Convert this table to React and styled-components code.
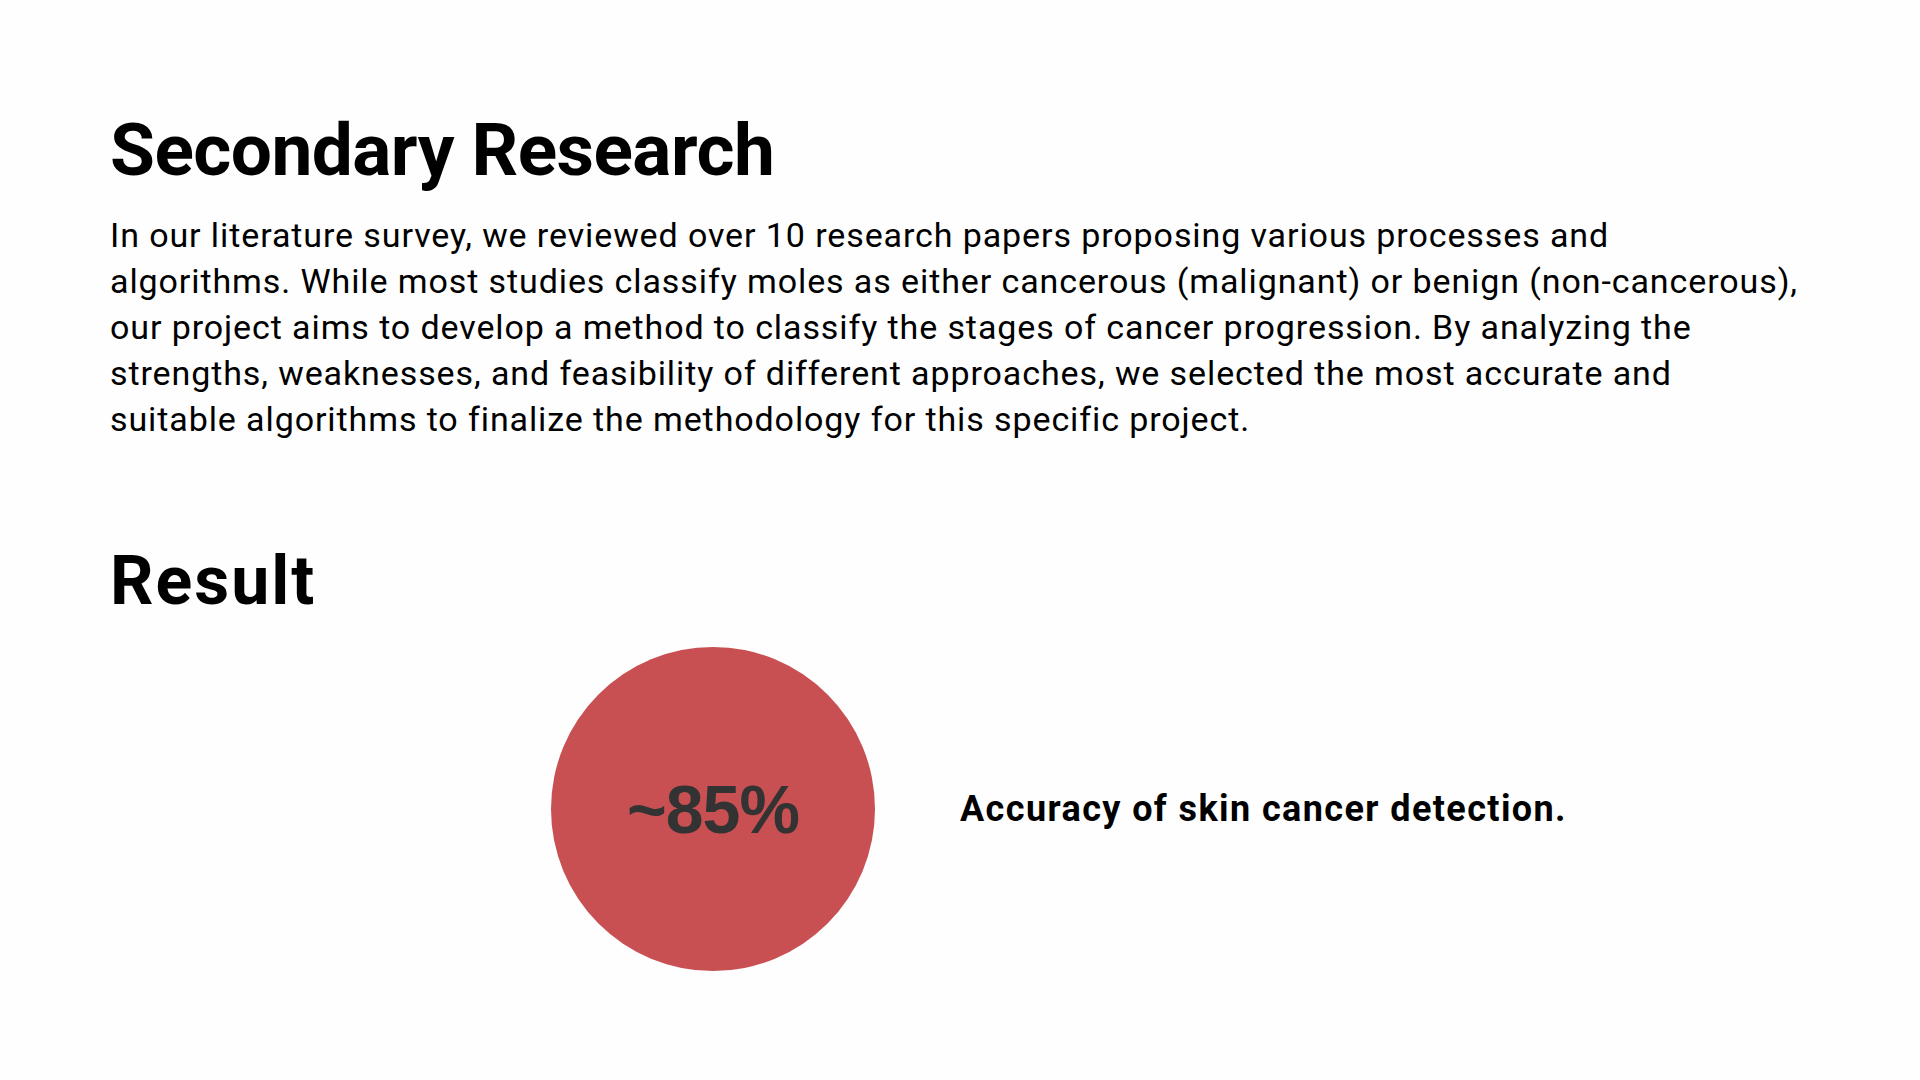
import React from "react";
import styled, { createGlobalStyle } from "styled-components";

const GlobalStyle = createGlobalStyle`
  html, body {
    margin: 0;
    padding: 0;
    background: #fefefe;
  }
  body {
    font-family: Roboto, "Liberation Sans", sans-serif;
    color: #000;
  }
`;

const Page = styled.main`
  width: 1920px;
  height: 1080px;
  box-sizing: border-box;
  padding: 114px 110px 0 110px;
  display: flex;
  flex-direction: column;
  overflow: hidden;
`;

const Title = styled.h1`
  margin: 0;
  font-family: Roboto, "Liberation Sans", sans-serif;
  font-weight: 700;
  font-size: ${(p) => p.$size}px;
  line-height: ${(p) => p.$size}px;
  letter-spacing: ${(p) => p.$tracking || 0}px;
  color: #000;
`;

const Paragraph = styled.p`
  margin: 25px 0 0 0;
  font-size: 34px;
  line-height: 46px;
  letter-spacing: 0.9px;
  font-weight: 400;
  white-space: nowrap;
  color: #000;
`;

const ResultSection = styled.section`
  margin-top: 105px;
  display: flex;
  flex-direction: column;
`;

const ResultRow = styled.div`
  margin-top: 32px;
  margin-left: 441px;
  display: flex;
  align-items: center;
  gap: 85px;
`;

const Circle = styled.div`
  width: 324px;
  height: 324px;
  border-radius: 50%;
  background: #c85052;
  display: flex;
  align-items: center;
  justify-content: center;
  flex-shrink: 0;
`;

const Stat = styled.span`
  font-family: "Liberation Sans", Arial, sans-serif;
  font-weight: 700;
  font-size: 68px;
  letter-spacing: -1px;
  line-height: 1;
  color: #333333;
`;

const Caption = styled.p`
  margin: 0;
  font-size: 36px;
  line-height: 36px;
  letter-spacing: 1.4px;
  font-weight: 700;
  color: #000;
`;

const lines = [
  "In our literature survey, we reviewed over 10 research papers proposing various processes and",
  "algorithms. While most studies classify moles as either cancerous (malignant) or benign (non-cancerous),",
  "our project aims to develop a method to classify the stages of cancer progression. By analyzing the",
  "strengths, weaknesses, and feasibility of different approaches, we selected the most accurate and",
  "suitable algorithms to finalize the methodology for this specific project.",
];

export default function App() {
  return (
    <>
      <GlobalStyle />
      <Page>
        <Title $size={73} $tracking={-0.55}>Secondary Research</Title>
        <Paragraph>
          {lines.map((l, i) => (
            <React.Fragment key={i}>
              {l}
              {i < lines.length - 1 && <br />}
            </React.Fragment>
          ))}
        </Paragraph>
        <ResultSection>
          <Title as="h2" $size={68} $tracking={2}>Result</Title>
          <ResultRow>
            <Circle>
              <Stat>~85%</Stat>
            </Circle>
            <Caption>Accuracy of skin cancer detection.</Caption>
          </ResultRow>
        </ResultSection>
      </Page>
    </>
  );
}
